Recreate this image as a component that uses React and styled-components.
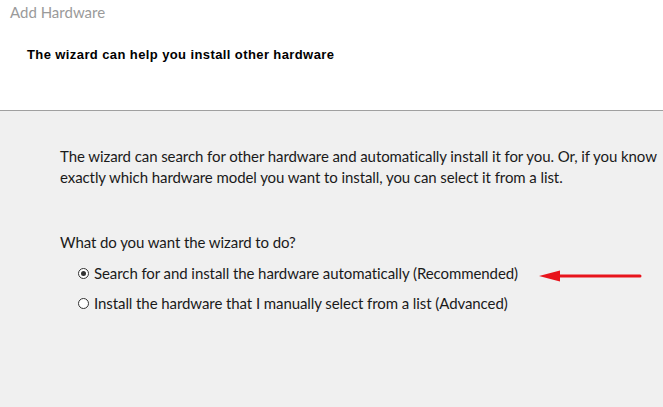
import React from 'react';
import styled, { createGlobalStyle } from 'styled-components';

const GlobalStyle = createGlobalStyle`
  html, body {
    margin: 0;
    padding: 0;
    background: #f0f0f0;
  }
  #root {
    width: 663px;
    height: 407px;
    overflow: hidden;
  }
`;

const Window = styled.div`
  width: 663px;
  height: 407px;
  display: flex;
  flex-direction: column;
  font-family: Lato, 'Noto Sans', sans-serif;
`;

const Header = styled.div`
  height: 111px;
  background: #ffffff;
  border-bottom: 1px solid #a0a0a0;
  box-sizing: border-box;
  padding: 4px 0 0 10px;
`;

const Title = styled.div`
  font-size: 15px;
  line-height: 17px;
  color: #9a9a9a;
`;

const Heading = styled.div`
  margin: 26px 0 0 17px;
  font-family: 'Liberation Sans', Arial, sans-serif;
  font-weight: bold;
  font-size: 13px;
  letter-spacing: 0.4px;
  line-height: 16px;
  color: #000;
`;

const Body = styled.div`
  flex: 1;
  background: #f0f0f0;
  padding: 35px 0 0 60px;
  color: #1a1a1a;
  font-size: 15px;
  letter-spacing: -0.08px;
`;

const Intro = styled.p`
  margin: 0;
  line-height: 21px;
  white-space: nowrap;
`;

const Question = styled.p`
  margin: 44px 0 0;
  line-height: 21px;
`;

const Options = styled.div`
  display: flex;
  flex-direction: column;
  gap: 9px;
  margin: 10px 0 0 18px;
`;

const Option = styled.label`
  display: flex;
  align-items: center;
  gap: 5px;
  line-height: 21px;
  position: relative;
`;

const Radio = styled.span`
  width: 9px;
  height: 9px;
  border-radius: 50%;
  border: 1px solid #333;
  background: #fff;
  display: flex;
  align-items: center;
  justify-content: center;
  flex-shrink: 0;

  &::after {
    content: '';
    display: ${p => (p.checked ? 'block' : 'none')};
    width: 5px;
    height: 5px;
    border-radius: 50%;
    background: #333;
  }
`;

const Arrow = styled.svg`
  position: absolute;
  left: 461px;
  top: 6px;
`;

function RedArrow() {
  return (
    <Arrow width="110" height="14" viewBox="0 0 110 14">
      <line x1="18" y1="7" x2="101" y2="7" stroke="#e8141c" strokeWidth="3" strokeLinecap="round" />
      <polygon points="0,7 21,1.5 21,12.5" fill="#e8141c" />
    </Arrow>
  );
}

export default function App() {
  return (
    <>
      <GlobalStyle />
      <Window>
        <Header>
          <Title>Add Hardware</Title>
          <Heading>The wizard can help you install other hardware</Heading>
        </Header>
        <Body>
          <Intro>
            The wizard can search for other hardware and automatically install it for you. Or, if you know
            <br />
            exactly which hardware model you want to install, you can select it from a list.
          </Intro>
          <Question>What do you want the wizard to do?</Question>
          <Options>
            <Option>
              <Radio checked />
              Search for and install the hardware automatically (Recommended)
              <RedArrow />
            </Option>
            <Option>
              <Radio />
              Install the hardware that I manually select from a list (Advanced)
            </Option>
          </Options>
        </Body>
      </Window>
    </>
  );
}
